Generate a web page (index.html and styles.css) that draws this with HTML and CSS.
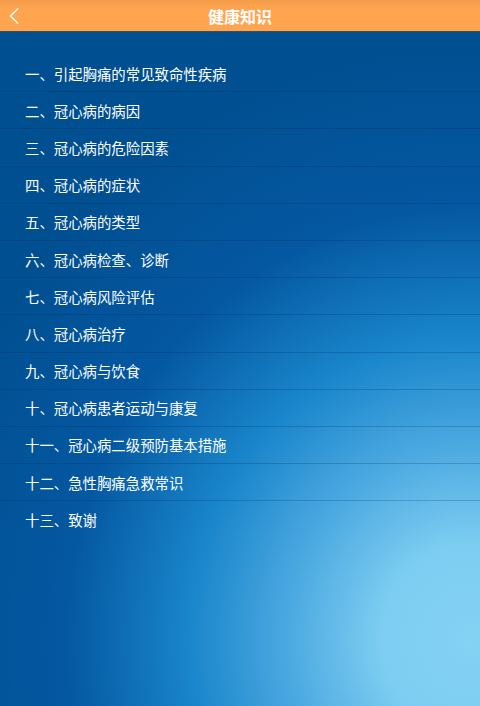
FILE: index.html
```html
<!DOCTYPE html>
<html lang="zh-CN">
<head>
<meta charset="utf-8">
<title>健康知识</title>
<link rel="stylesheet" href="styles.css">
</head>
<body>
<div class="page">
  <header class="topbar">
    <span class="back"><svg width="12" height="18" viewBox="0 0 12 18"><path d="M10 1.5 L2.5 9 L10 16.5" fill="none" stroke="#fff" stroke-width="1.6"/></svg></span>
    <h1 class="title">健康知识</h1>
  </header>
  <ul class="list">
    <li class="item">一、引起胸痛的常见致命性疾病</li>
    <li class="item">二、冠心病的病因</li>
    <li class="item">三、冠心病的危险因素</li>
    <li class="item">四、冠心病的症状</li>
    <li class="item">五、冠心病的类型</li>
    <li class="item">六、冠心病检查、诊断</li>
    <li class="item">七、冠心病风险评估</li>
    <li class="item">八、冠心病治疗</li>
    <li class="item">九、冠心病与饮食</li>
    <li class="item">十、冠心病患者运动与康复</li>
    <li class="item">十一、冠心病二级预防基本措施</li>
    <li class="item">十二、急性胸痛急救常识</li>
    <li class="item">十三、致谢</li>
  </ul>
</div>
</body>
</html>
```
FILE: styles.css
```css
html, body {
  margin: 0;
  padding: 0;
}
body {
  font-family: "Noto Sans CJK SC", "Noto Sans", sans-serif;
}
.page {
  width: 480px;
  height: 706px;
  overflow: hidden;
  display: flex;
  flex-direction: column;
  background:
    radial-gradient(ellipse 560px 600px at 470px 640px, #84d2f4 0%, #7ccdf1 16%, #4aa8e0 33%, #1a86cb 50%, rgba(6,92,168,0.7) 72%, rgba(0,79,145,0) 100%),
    #004f91;
}
.topbar {
  height: 32px;
  flex: none;
  display: flex;
  align-items: center;
  justify-content: center;
  position: relative;
  background: linear-gradient(#f39c4a, #ffa550 30%, #ffa550);
  border-bottom: 1px solid #3a4c66;
  box-sizing: border-box;
}
.back {
  position: absolute;
  left: 8px;
  top: 7px;
  display: flex;
}
.title {
  margin: 0;
  color: #fff;
  font-size: 16px;
  font-weight: 700;
  line-height: 32px;
}
.list {
  list-style: none;
  margin: 23px 0 0 0;
  padding: 0;
}
.item {
  height: 37.2px;
  box-sizing: border-box;
  padding-left: 25px;
  display: flex;
  align-items: center;
  color: #fff;
  font-size: 14.4px;
  border-bottom: 1px solid rgba(0, 35, 80, 0.22);
}
.item:last-child {
  border-bottom: none;
}
```
